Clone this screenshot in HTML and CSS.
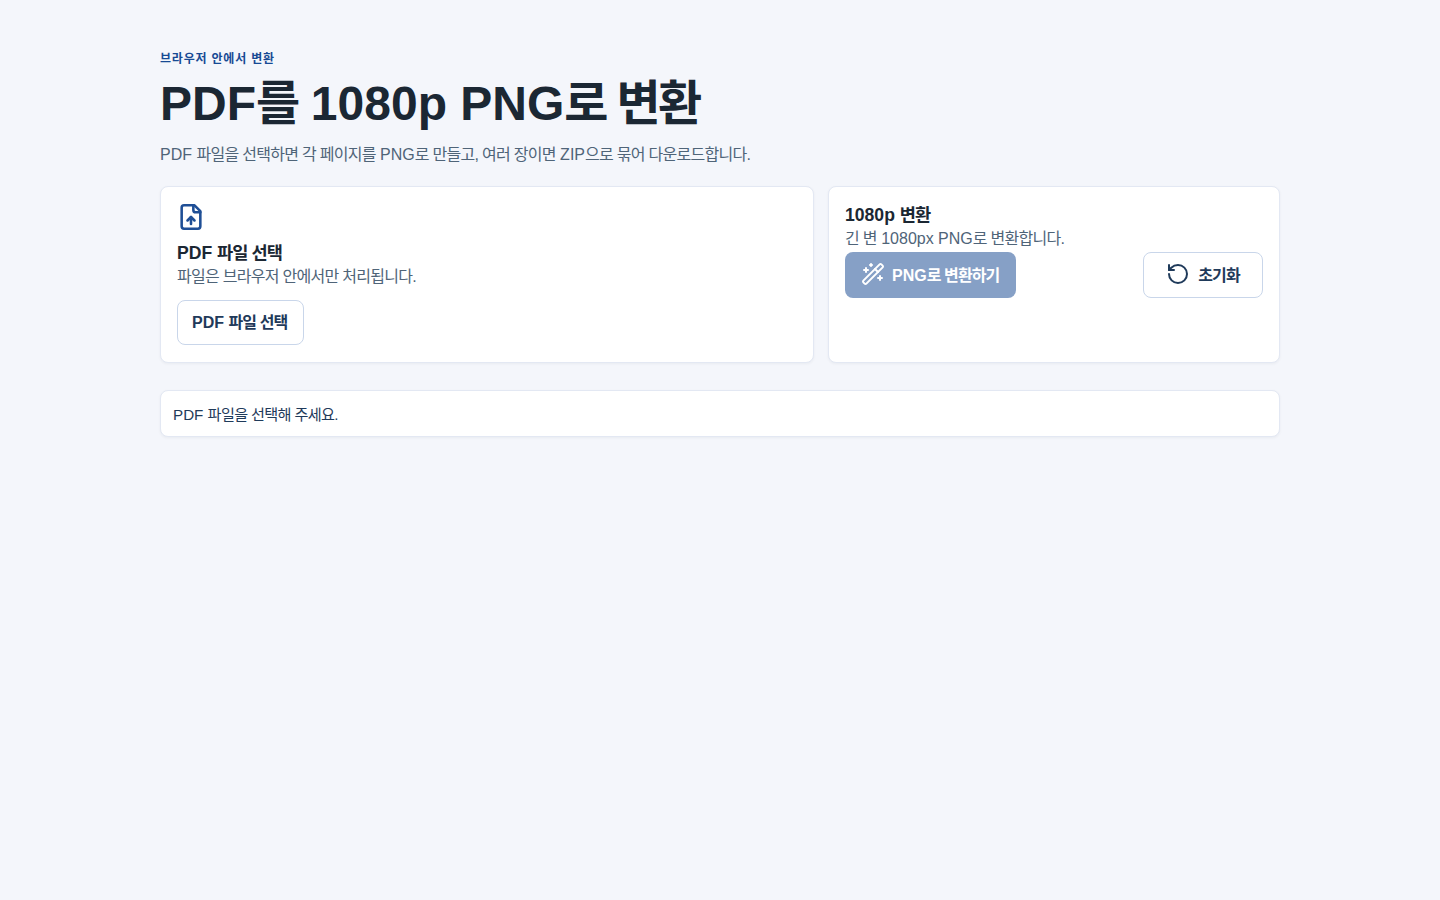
FILE: index.html
```html
<!DOCTYPE html>
<html lang="ko">
<head>
    <meta charset="UTF-8">
    <meta name="viewport" content="width=device-width, initial-scale=1.0">
    <title>PDF를 1080p PNG로 변환</title>
    <link rel="stylesheet" href="styles.css">
</head>
<body>

<main class="page">
    <header class="intro">
        <p class="eyebrow">브라우저 안에서 변환</p>
        <h1>PDF<span class="ko">를</span> 1080p PNG<span class="ko">로 변환</span></h1>
        <p class="lead">PDF <span class="ko">파일을 선택하면 각 페이지를</span> PNG<span class="ko">로 만들고, 여러 장이면</span> ZIP<span class="ko">으로 묶어 다운로드합니다.</span></p>
    </header>

    <section class="panels">
        <div class="card pick">
            <svg class="icon icon-file" viewBox="0 0 24 24" fill="none" stroke="currentColor" stroke-width="2.2" stroke-linecap="round" stroke-linejoin="round">
                <path d="M15 2H6a2 2 0 0 0-2 2v16a2 2 0 0 0 2 2h12a2 2 0 0 0 2-2V7Z"/>
                <path d="M14 2v4a2 2 0 0 0 2 2h4"/>
                <path d="M12 12v6"/>
                <path d="m15 15-3-3-3 3"/>
            </svg>
            <h2>PDF <span class="ko">파일 선택</span></h2>
            <p class="hint"><span class="ko">파일은 브라우저 안에서만 처리됩니다.</span></p>
            <button class="button outline" type="button"><span>PDF <span class="ko">파일 선택</span></span></button>
        </div>

        <div class="card convert">
            <h2>1080p <span class="ko">변환</span></h2>
            <p class="hint"><span class="ko">긴 변</span> 1080px PNG<span class="ko">로 변환합니다.</span></p>
            <div class="actions">
                <button class="button primary" type="button" disabled>
                    <svg class="icon" viewBox="0 0 24 24" fill="none" stroke="currentColor" stroke-width="2" stroke-linecap="round" stroke-linejoin="round">
                        <path d="m21.64 3.64-1.28-1.28a1.21 1.21 0 0 0-1.72 0L2.36 18.64a1.21 1.21 0 0 0 0 1.72l1.28 1.28a1.2 1.2 0 0 0 1.72 0L21.64 5.36a1.2 1.2 0 0 0 0-1.72"/>
                        <path d="m14 7 3 3"/>
                        <path d="M5 6v4"/>
                        <path d="M19 14v4"/>
                        <path d="M10 2v2"/>
                        <path d="M7 8H3"/>
                        <path d="M21 16h-4"/>
                        <path d="M11 3H9"/>
                    </svg>
                    <span>PNG<span class="ko">로 변환하기</span></span>
                </button>
                <button class="button outline reset" type="button">
                    <svg class="icon" viewBox="0 0 24 24" fill="none" stroke="currentColor" stroke-width="2" stroke-linecap="round" stroke-linejoin="round">
                        <path d="M3 12a9 9 0 1 0 9-9 9.75 9.75 0 0 0-6.74 2.74L3 8"/>
                        <path d="M3 3v5h5"/>
                    </svg>
                    <span class="ko">초기화</span>
                </button>
            </div>
        </div>
    </section>

    <div class="card status">PDF <span class="ko">파일을 선택해 주세요.</span></div>
</main>

</body>
</html>
```

FILE: styles.css
```css
* {
    box-sizing: border-box;
}
body {
    margin: 0;
    min-height: 100vh;
    background: #f4f6fb;
    color: #1b2733;
    font-family: "Liberation Sans", Arial, "Noto Sans CJK KR", sans-serif;
}
.ko {
    letter-spacing: -0.045em;
}
.page {
    width: 1120px;
    margin: 0 auto;
    padding-top: 49px;
}
.eyebrow {
    margin: 0 0 6px;
    font-size: 12px;
    line-height: 20px;
    font-weight: 700;
    letter-spacing: 0.8px;
    color: #174a94;
}
h1 {
    margin: 0;
    font-size: 48px;
    line-height: 58px;
    font-weight: 700;
    color: #1b2733;
}
h1 .ko {
    letter-spacing: -0.055em;
}
.lead {
    margin: 10px 0 0;
    font-size: 16px;
    line-height: 24px;
    color: #4f6478;
}
.panels {
    display: grid;
    grid-template-columns: 654px 1fr;
    gap: 14px;
    margin-top: 19px;
    height: 177px;
}
.card {
    background: #fff;
    border: 1px solid #e3e8f3;
    border-radius: 8px;
    box-shadow: 0 1px 3px rgba(27, 39, 51, 0.05);
    padding: 16px;
}
.icon {
    width: 24px;
    height: 24px;
    flex: none;
}
.icon-file {
    display: block;
    width: 28px;
    height: 28px;
    margin-bottom: 10px;
    color: #1f4f96;
}
h2 {
    margin: 0;
    font-size: 17.6px;
    line-height: 24px;
    font-weight: 700;
    color: #1b2733;
}
h2 .ko {
    letter-spacing: -0.055em;
}
.hint {
    margin: 2px 0 0;
    font-size: 16px;
    line-height: 20px;
    color: #4f6478;
}
.button {
    display: inline-flex;
    align-items: center;
    justify-content: center;
    gap: 7px;
    height: 46px;
    padding: 0 16px 2px;
    border-radius: 8px;
    font-family: inherit;
    font-size: 16px;
    font-weight: 700;
}
.outline {
    background: #fff;
    border: 1px solid #c9d6ea;
    color: #1f3a5a;
}
.pick .button {
    height: 45px;
    margin-top: 13px;
    padding: 0 16px 3px 14px;
}
.button .ko {
    letter-spacing: -0.055em;
}
.primary {
    background: #86a0c6;
    border: 0;
    padding-right: 17px;
    color: #fff;
}
.actions {
    display: flex;
    justify-content: space-between;
    margin-top: 3px;
}
.reset {
    width: 120px;
    gap: 8px;
}
.status {
    margin-top: 27px;
    height: 47px;
    padding: 13px 12px 0;
    font-size: 15.2px;
    line-height: 22px;
    color: #1f3a5a;
}
```
